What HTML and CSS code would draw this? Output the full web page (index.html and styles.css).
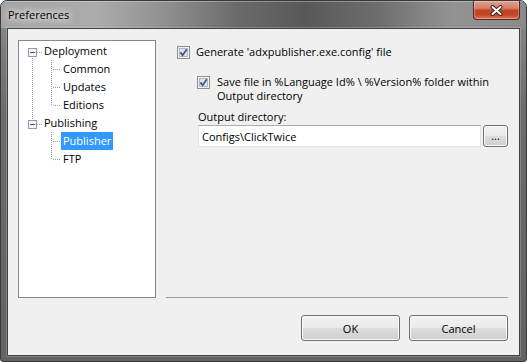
FILE: index.html
```html
<!DOCTYPE html>
<html lang="en">
<head>
  <meta charset="UTF-8"/>
  <title>Preferences</title>
  <link rel="stylesheet" href="styles.css">
</head>
<body>
<div class="window">
  <div class="titlebar">
    <span class="title">Preferences</span>
    <div class="close">
      <svg width="15" height="11" viewBox="0 0 15 11">
        <path d="M3.5 2 L11.5 9 M11.5 2 L3.5 9" stroke="#3b2622" stroke-width="4" stroke-linecap="round" fill="none"/>
        <path d="M3.5 2 L11.5 9 M11.5 2 L3.5 9" stroke="#fff" stroke-width="2" stroke-linecap="round" fill="none"/>
      </svg>
    </div>
  </div>

  <div class="client">
    <div class="main">
      <div class="tree">
        <div class="node">
          <svg width="23" height="18" viewBox="0 0 23 18">
            <path class="dots" d="M13.5 16 V18 M18 10.5 H23"/>
            <rect class="box" x="9.5" y="6.5" width="8" height="8"/>
            <path class="minus" d="M11 10.5 H16"/>
          </svg>
          <span class="label">Deployment</span>
        </div>
        <div class="node">
          <svg width="42" height="18" viewBox="0 0 42 18">
            <path class="dots" d="M13.5 0 V18 M32.5 0 V18 M34 9.5 H42"/>
          </svg>
          <span class="label">Common</span>
        </div>
        <div class="node">
          <svg width="42" height="18" viewBox="0 0 42 18">
            <path class="dots" d="M13.5 0 V18 M32.5 0 V18 M34 9.5 H42"/>
          </svg>
          <span class="label">Updates</span>
        </div>
        <div class="node">
          <svg width="42" height="18" viewBox="0 0 42 18">
            <path class="dots" d="M13.5 0 V18 M32.5 0 V10 M34 9.5 H42"/>
          </svg>
          <span class="label">Editions</span>
        </div>
        <div class="node">
          <svg width="23" height="18" viewBox="0 0 23 18">
            <path class="dots" d="M13.5 0 V6 M18 10.5 H23"/>
            <rect class="box" x="9.5" y="6.5" width="8" height="8"/>
            <path class="minus" d="M11 10.5 H16"/>
          </svg>
          <span class="label">Publishing</span>
        </div>
        <div class="node">
          <svg width="42" height="18" viewBox="0 0 42 18">
            <path class="dots" d="M32.5 0 V18 M34 9.5 H42"/>
          </svg>
          <span class="label selected">Publisher</span>
        </div>
        <div class="node">
          <svg width="42" height="18" viewBox="0 0 42 18">
            <path class="dots" d="M32.5 0 V10 M34 9.5 H42"/>
          </svg>
          <span class="label">FTP</span>
        </div>
      </div>

      <div class="panel">
        <label class="check">
          <svg class="checkbox" width="13" height="13" viewBox="0 0 13 13">
            <rect x="0.5" y="0.5" width="12" height="12" fill="#f4f4f4" stroke="#8e8f8f"/>
            <rect x="2.5" y="2.5" width="8" height="8" fill="#dfe3e8" stroke="#b4b9bf"/>
            <path d="M3.4 6.4 L5.6 9.2 L9.8 3.2" fill="none" stroke="#3c5296" stroke-width="1.7"/>
          </svg>
          <span>Generate 'adxpublisher.exe.config' file</span>
        </label>
        <label class="check sub">
          <svg class="checkbox" width="13" height="13" viewBox="0 0 13 13">
            <rect x="0.5" y="0.5" width="12" height="12" fill="#f4f4f4" stroke="#8e8f8f"/>
            <rect x="2.5" y="2.5" width="8" height="8" fill="#dfe3e8" stroke="#b4b9bf"/>
            <path d="M3.4 6.4 L5.6 9.2 L9.8 3.2" fill="none" stroke="#3c5296" stroke-width="1.7"/>
          </svg>
          <span>Save file in %Language Id% \ %Version% folder within<br>Output directory</span>
        </label>
        <div class="field-label">Output directory:</div>
        <div class="field">
          <input class="text" type="text" value="Configs\ClickTwice">
          <button class="btn browse">...</button>
        </div>
      </div>
    </div>

    <div class="buttons">
      <button class="btn">OK</button>
      <button class="btn">Cancel</button>
    </div>
  </div>
</div>
</body>
</html>
```

FILE: styles.css
```css
body {
  margin: 0;
  font-family: "Open Sans", sans-serif;
  font-size: 11px;
  color: #000;
  background: #fff;
}
.window {
  width: 527px;
  height: 362px;
  box-sizing: border-box;
  border: 1px solid #3a3a3a;
  border-radius: 7px 7px 3px 3px;
  background: linear-gradient(#8c8c8c, #6c6c6c 30%, #626262);
  overflow: hidden;
}
.titlebar {
  height: 27px;
  display: flex;
  align-items: flex-start;
  background: linear-gradient(to right, #a4a4a4 0%, #acacac 18%, #8e8e8e 32%, #6a6a6a 45%, #585858 58%, #6e6e6e 72%, #939393 86%, #8a8a8a 100%);
  box-shadow: inset 0 1px 0 rgba(255,255,255,0.3);
}
.title {
  padding: 7px 0 0 7px;
  line-height: 14px;
  font-size: 11px;
  text-shadow: 0 0 6px #fff, 0 0 10px rgba(255,255,255,0.9), 0 0 14px rgba(255,255,255,0.7);
}
.close {
  margin-left: auto;
  margin-right: 6px;
  width: 45px;
  height: 18px;
  border: 1px solid #4a2a22;
  border-top: none;
  border-radius: 0 0 4px 4px;
  background: linear-gradient(#e2a08e 0%, #d6806a 40%, #c4421f 52%, #c4452a 78%, #e07a58 100%);
  box-shadow: inset 0 0 0 1px rgba(255,255,255,0.3);
  display: flex;
  align-items: center;
  justify-content: center;
}
.client {
  margin: 0 6px 5px 6px;
  height: 326px;
  border: 1px solid #404040;
  background: #f0f0f0;
  box-shadow: 0 0 0 1px rgba(255,255,255,0.2);
}
.main {
  display: flex;
  gap: 10px;
  padding: 11px 11px 0 10px;
}
.tree {
  width: 138px;
  height: 258px;
  box-sizing: border-box;
  border: 1px solid #828790;
  background: #fff;
  padding-top: 1px;
}
.node {
  display: flex;
  height: 18px;
  align-items: center;
}
.node svg {
  flex: none;
  display: block;
}
.dots {
  fill: none;
  stroke: #a0a0a0;
  stroke-dasharray: 1 1;
}
.box {
  fill: #f6f7f9;
  stroke: #8e9cad;
}
.minus {
  stroke: #2f55a4;
}
.label {
  padding: 0 2px;
  line-height: 18px;
  height: 18px;
}
.label.selected {
  background: #3399ff;
  color: #fff;
}
.panel {
  flex: 1;
  height: 258px;
  box-sizing: border-box;
  border-bottom: 1px solid #a0a0a0;
  padding: 6px 0 0 11px;
}
.check {
  display: flex;
  align-items: flex-start;
  gap: 6px;
  line-height: 13.5px;
}
.checkbox {
  flex: none;
  display: block;
}
.check span {
  margin-top: -1px;
}
.check.sub {
  margin: 17px 0 0 20px;
  gap: 7px;
}
.field-label {
  margin: 8px 0 0 21px;
  line-height: 14px;
}
.field {
  display: flex;
  gap: 2px;
  margin: 1px 0 0 21px;
}
.text {
  width: 283px;
  height: 22px;
  box-sizing: border-box;
  margin: 0;
  padding: 0 0 0 3px;
  border: 1px solid #e2e3ea;
  border-top-color: #abadb3;
  background: #fff;
  font-family: "Open Sans", sans-serif;
  font-size: 11px;
  color: #000;
  outline: none;
}
.btn {
  margin: 0;
  padding: 0;
  box-sizing: border-box;
  border: 1px solid #707070;
  border-radius: 3px;
  background: linear-gradient(#f2f2f2 0%, #ebebeb 50%, #dddddd 50%, #cfcfcf 100%);
  box-shadow: inset 0 0 0 1px #fbfbfb;
  font-family: "Open Sans", sans-serif;
  font-size: 11px;
  color: #000;
}
.browse {
  width: 25px;
  height: 22px;
  line-height: 14px;
}
.buttons {
  display: flex;
  justify-content: flex-end;
  gap: 9px;
  padding: 17px 11px 0 0;
}
.buttons .btn {
  width: 99px;
  height: 26px;
}
```
